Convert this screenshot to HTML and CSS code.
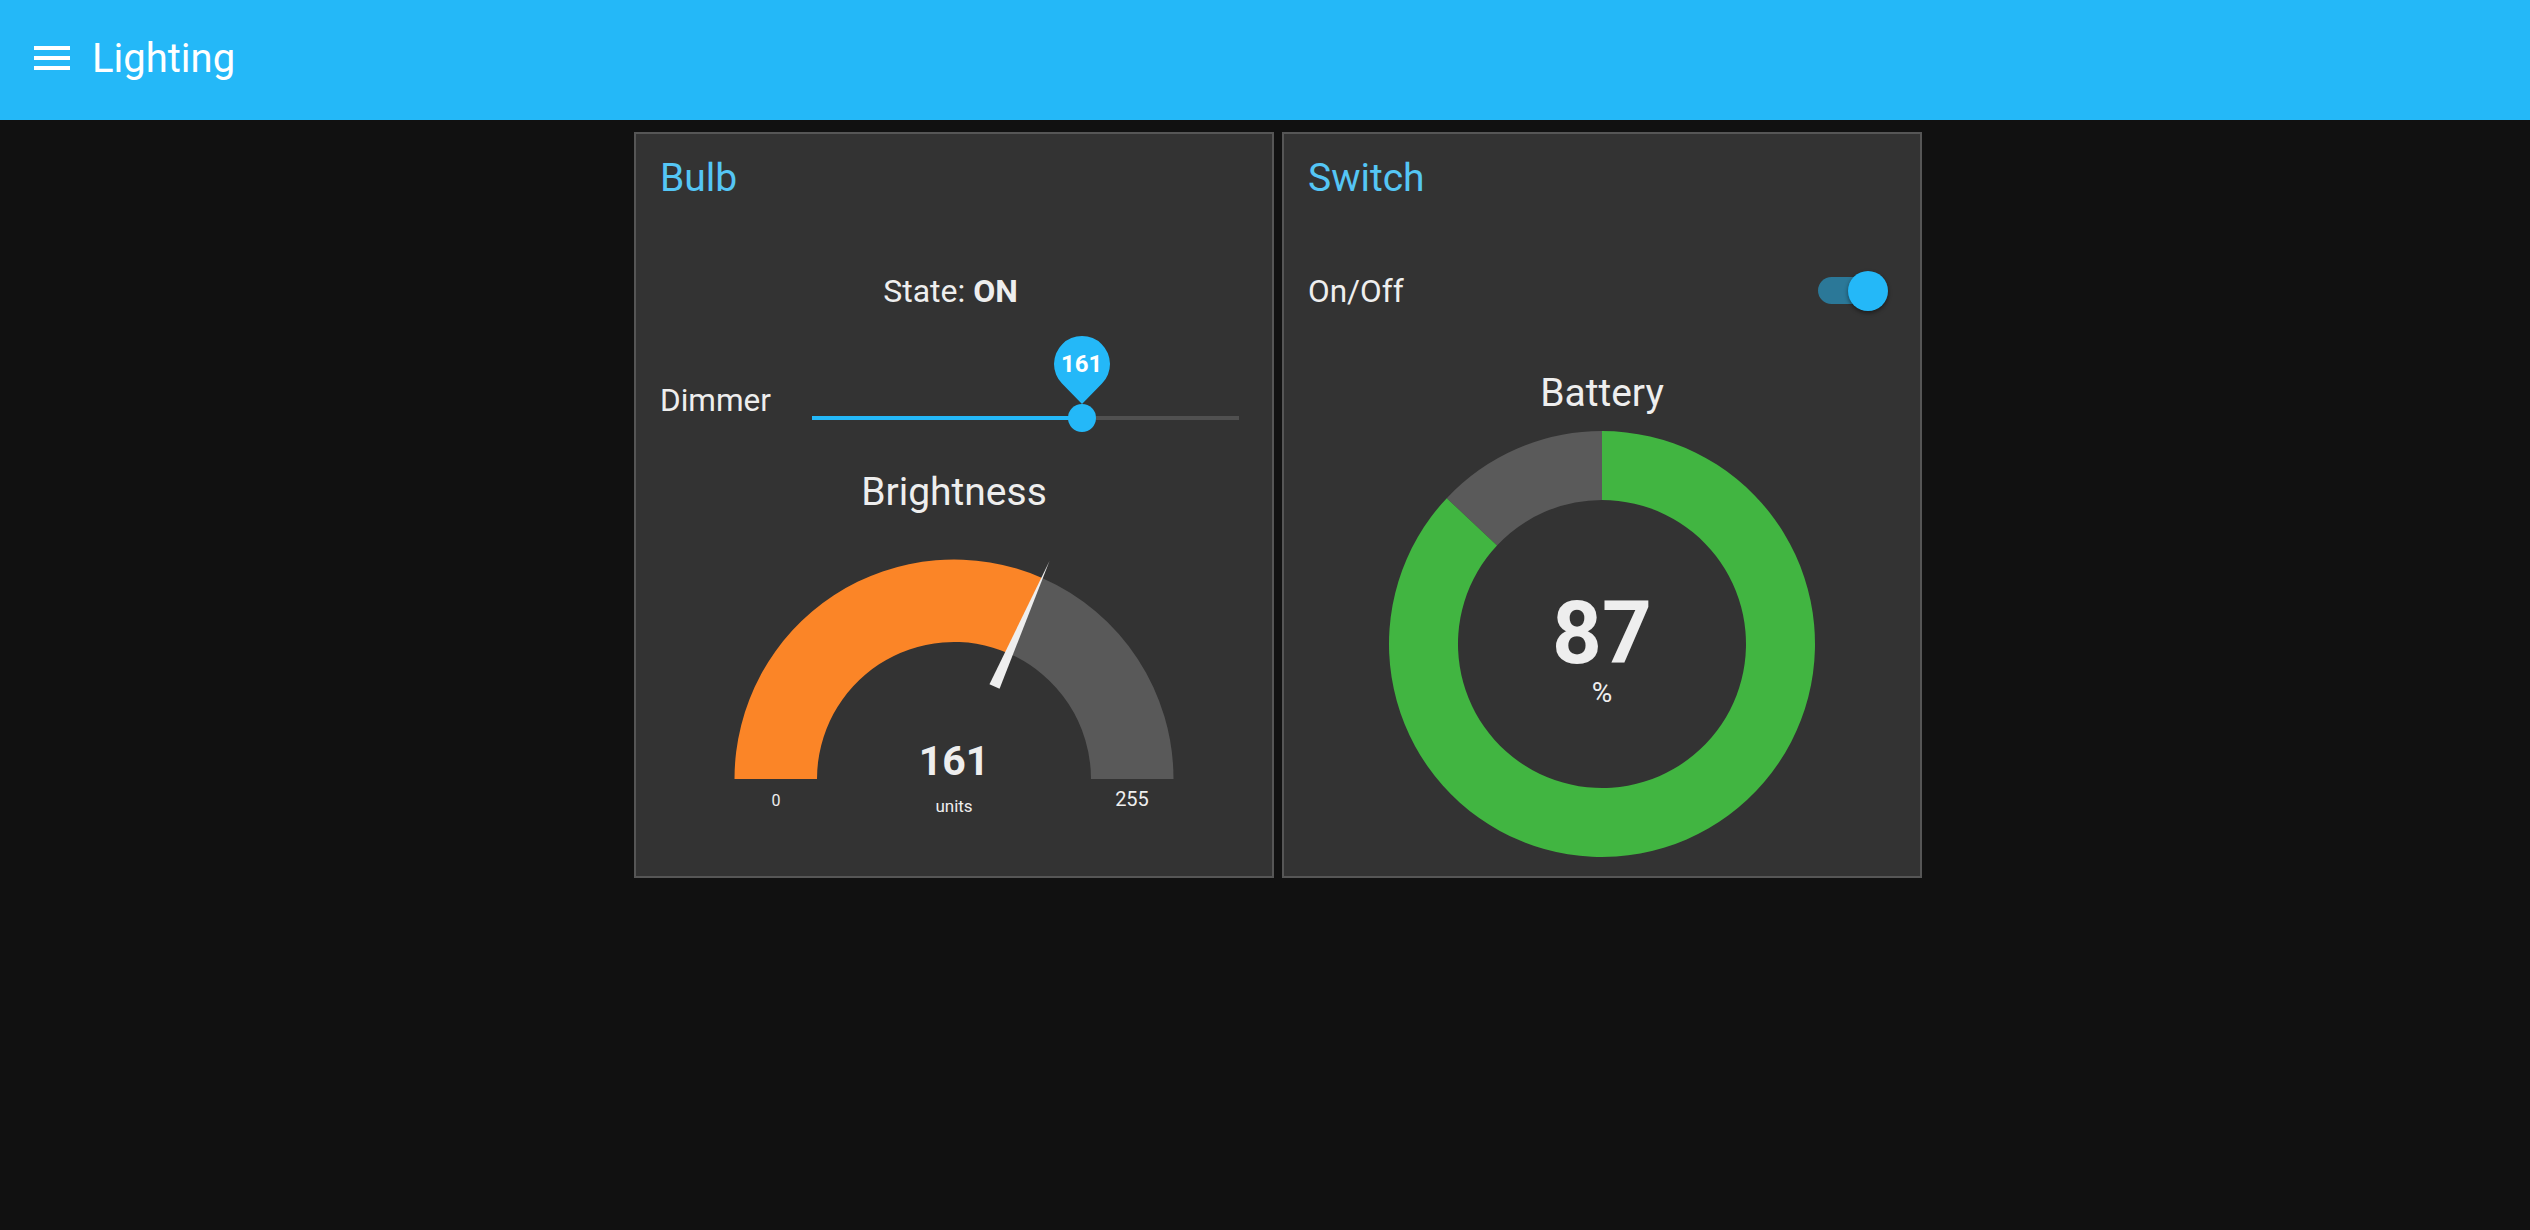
FILE: index.html
```html
<!DOCTYPE html>
<html lang="en">
<head>
<meta charset="utf-8">
<title>Lighting</title>
<link rel="stylesheet" href="styles.css">
</head>
<body>
<header class="topbar">
  <button class="menu" aria-label="Menu">
    <span class="bar"></span><span class="bar"></span><span class="bar"></span>
  </button>
  <h1 class="app-title">Lighting</h1>
</header>
<main class="board">
  <section class="card">
    <h2 class="card-title">Bulb</h2>
    <div class="row row-state">State:&nbsp;<b>ON</b></div>
    <div class="row row-slider">
      <span class="label">Dimmer</span>
      <div class="slider">
        <div class="track"><div class="fill" style="width:63.14%"></div></div>
        <div class="thumb" style="left:63.14%"></div>
        <div class="pin" style="left:63.14%">
          <svg class="pin-shape" width="56" height="68" viewBox="0 0 56 68"><path d="M28 68 L8 47.6 A28 28 0 1 1 48 47.6 Z"/></svg>
          <span class="pin-value">161</span>
        </div>
      </div>
    </div>
    <div class="row row-heading row-heading-gauge">Brightness</div>
    <svg class="gauge" width="636" height="332" viewBox="0 0 636 332">
      <path class="arc-fill" d="M98.5 235 A219.5 219.5 0 0 1 406.06 33.94 L372.96 109.51 A137 137 0 0 0 181 235 Z"/>
      <path class="arc-rest" d="M406.06 33.94 A219.5 219.5 0 0 1 537.5 235 L455 235 A137 137 0 0 0 372.96 109.51 Z"/>
      <path class="needle" d="M353.48 140.27 L413.49 17 L363.56 144.69 Z"/>
      <text class="g-value" x="318" y="231">161</text>
      <text class="g-units" x="318" y="268">units</text>
      <text class="g-min" x="140" y="262">0</text>
      <text class="g-max" x="496" y="262">255</text>
    </svg>
  </section>
  <section class="card">
    <h2 class="card-title">Switch</h2>
    <div class="row row-switch">
      <span class="label">On/Off</span>
      <div class="toggle"><span class="toggle-track"></span><span class="toggle-thumb"></span></div>
    </div>
    <div class="row row-heading row-heading-donut">Battery</div>
    <svg class="donut" width="636" height="450" viewBox="0 0 636 450">
      <path class="ring-rest" d="M162.72 72.2 A213 213 0 0 1 318 5 L318 74 A144 144 0 0 0 213.02 119.43 Z"/>
      <path class="ring-fill" d="M318 5 A213 213 0 1 1 162.72 72.2 L213.02 119.43 A144 144 0 1 0 318 74 Z"/>
      <text class="d-value" x="318" y="237">87</text>
      <text class="d-units" x="318" y="276">%</text>
    </svg>
  </section>
</main>
</body>
</html>
```

FILE: styles.css
```css
* { box-sizing: border-box; }

html, body {
  margin: 0;
  padding: 0;
  background: #111111;
  color: #eeeeee;
  font-family: Roboto, "Liberation Sans", Arial, sans-serif;
}

.topbar {
  height: 120px;
  background: #24b8f8;
  display: flex;
  align-items: center;
  padding-left: 34px;
}

.menu {
  width: 36px;
  height: 24px;
  padding: 0;
  margin: 0 22px 0 0;
  border: 0;
  background: transparent;
  display: flex;
  flex-direction: column;
  justify-content: space-between;
  position: relative;
  top: -2px;
}

.bar {
  display: block;
  height: 4px;
  width: 36px;
  background: #ffffff;
}

.app-title {
  margin: 0;
  font-size: 40px;
  font-weight: 400;
  color: #ffffff;
  line-height: 1;
  position: relative;
  top: -1px;
}

.board {
  display: flex;
  justify-content: center;
  gap: 8px;
  padding: 12px 0 0 26px;
}

.card {
  width: 640px;
  height: 746px;
  border: 2px solid #565656;
  background: #333333;
  display: flex;
  flex-direction: column;
}

.card-title {
  margin: 0;
  height: 88px;
  display: flex;
  align-items: center;
  padding: 0 24px;
  font-size: 39px;
  font-weight: 400;
  color: #55c6f5;
}

.row {
  display: flex;
  align-items: center;
  padding: 0 24px;
}

.row-state {
  height: 138px;
  justify-content: center;
  font-size: 32px;
  padding-right: 31px;
}

.row-state b {
  font-weight: 700;
}

.row-slider {
  height: 80px;
  display: grid;
  grid-template-columns: 152px 427px;
  align-items: center;
}

.label {
  font-size: 31.5px;
}

.slider {
  position: relative;
  height: 80px;
}

.track {
  position: absolute;
  left: 0;
  right: 0;
  top: 56px;
  height: 4px;
  background: #505050;
}

.fill {
  height: 100%;
  background: #24b8f8;
}

.thumb {
  position: absolute;
  top: 44px;
  width: 28px;
  height: 28px;
  margin-left: -14px;
  border-radius: 50%;
  background: #24b8f8;
}

.pin {
  position: absolute;
  top: -24px;
  width: 56px;
  height: 68px;
  margin-left: -28px;
}

.pin-shape {
  display: block;
  fill: #24b8f8;
}

.pin-value {
  position: absolute;
  left: 0;
  top: 0;
  width: 56px;
  height: 56px;
  line-height: 56px;
  text-align: center;
  font-size: 24px;
  font-weight: 700;
  color: #ffffff;
}

.row-heading {
  justify-content: center;
  font-size: 39px;
}

.row-heading-gauge {
  height: 104px;
}

.row-heading-donut {
  height: 66px;
}

.gauge, .donut {
  display: block;
}

.arc-fill { fill: #fb8527; }
.arc-rest { fill: #595959; }
.needle { fill: #eeeeee; }

.gauge text, .donut text {
  text-anchor: middle;
  fill: #eeeeee;
  font-family: Roboto, "Liberation Sans", Arial, sans-serif;
}

.g-value { font-size: 41px; font-weight: 700; }
.g-units { font-size: 17px; }
.g-min { font-size: 16px; }
.g-max { font-size: 20px; }

.row-switch {
  height: 138px;
  justify-content: space-between;
}

.toggle {
  position: relative;
  width: 70px;
  height: 40px;
  margin-right: 8px;
}

.toggle-track {
  position: absolute;
  left: 0;
  top: 6px;
  width: 68px;
  height: 27px;
  border-radius: 14px;
  background: #2b7898;
}

.toggle-thumb {
  position: absolute;
  left: 30px;
  top: 0;
  width: 40px;
  height: 40px;
  border-radius: 50%;
  background: #24b8f8;
  box-shadow: 0 2px 4px rgba(0, 0, 0, 0.45);
}

.ring-fill { fill: #41b541; }
.ring-rest { fill: #5a5a5a; }

.d-value { font-size: 87px; font-weight: 700; }
.d-units { font-size: 28px; }
```
